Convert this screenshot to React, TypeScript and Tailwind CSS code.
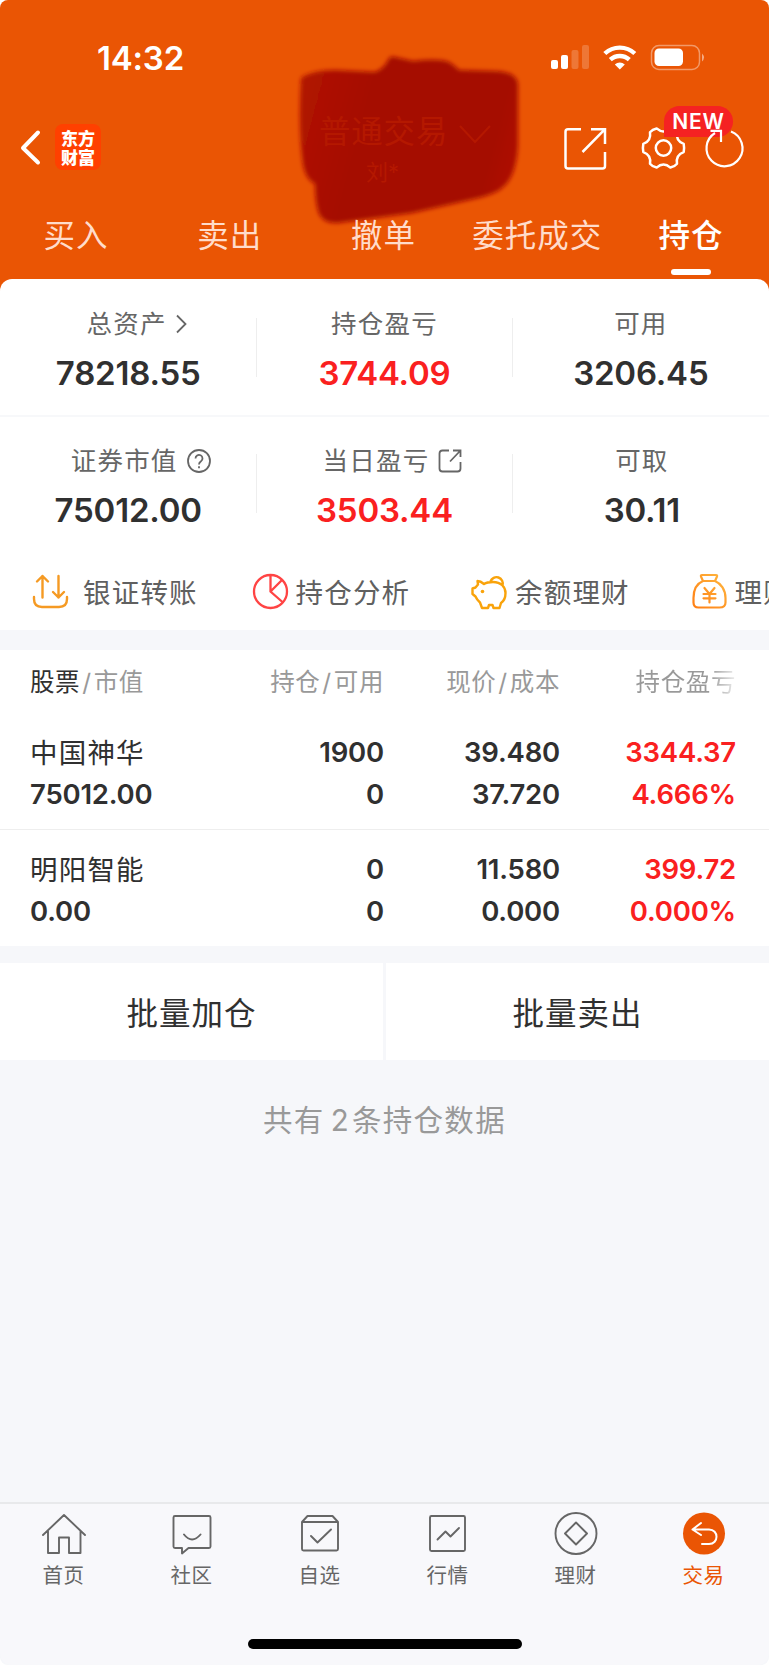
import type { ReactNode } from "react";

const tabs = ["买入", "卖出", "撤单", "委托成交", "持仓"];

const holdings = [
  { name: "中国神华", value: "75012.00", qty: "1900", avail: "0", price: "39.480", cost: "37.720", profit: "3344.37", rate: "4.666%" },
  { name: "明阳智能", value: "0.00", qty: "0", avail: "0", price: "11.580", cost: "0.000", profit: "399.72", rate: "0.000%" },
];

function StatusBar() {
  return (
    <div className="flex h-[115px] justify-between pr-[64px] pl-[97px] text-white">
      <div className="mt-[34px] h-12 text-[33px] leading-[48px] font-semibold tracking-[-.2px]">14:32</div>
      <svg className="mt-[42px]" width="156" height="32" viewBox="549 42 156 32" fill="#fff">
        <rect x="551" y="60" width="7" height="9" rx="2" />
        <rect x="561" y="55" width="7" height="14" rx="2" />
        <rect x="571.5" y="50" width="7" height="19" rx="2" opacity=".2" />
        <rect x="582" y="45" width="7" height="24" rx="2" opacity=".2" />
        <g fill="none" stroke="#fff" strokeWidth="4.4">
          <path d="M604.8 53.5a22 22 0 0 1 30 0" />
          <path d="M610.3 59.700a14 14 0 0 1 19 0" />
        </g>
        <path d="M619.800 69.500l-5-5a7.500 7.500 0 0 1 10 0z" />
        <rect x="651.5" y="45.500" width="48" height="24" rx="7.500" fill="none" stroke="#fff" strokeOpacity=".4" strokeWidth="1.500" />
        <rect x="654.5" y="48.500" width="28.500" height="17.500" rx="4.500" />
        <path d="M702 53.500v8q4-4 0-8" opacity=".5" />
      </svg>
    </div>
  );
}

function TitleBar() {
  return (
    <div className="relative flex h-[90px] items-start justify-between pr-[24px] pl-[19px]">
      <div className="flex">
        <svg className="mt-[14px]" width="22" height="38" viewBox="0 0 22 38" fill="none" stroke="#fff" strokeWidth="4" strokeLinecap="round" strokeLinejoin="round">
          <path d="M19 3.500L4 19l15 14.500" />
        </svg>
        <div className="mt-[9px] ml-[14px] flex size-[46px] flex-col items-center justify-center rounded-[8px] bg-[#ff4000] font-['Noto_Sans_CJK_SC'] text-[17px] leading-[19px] font-black text-white">
          <span>东方</span>
          <span>财富</span>
        </div>
      </div>

      <div className="absolute top-[-65px] left-[292px] h-[178px] w-[234px]">
        <svg className="absolute inset-0" width="234" height="178" viewBox="292 50 234 178">
          <defs>
            <filter id="soft" x="-10%" y="-10%" width="120%" height="120%">
              <feGaussianBlur stdDeviation="2" />
            </filter>
            <linearGradient id="ink" x1="0" y1="0.3" x2="1" y2="0.5">
              <stop stopColor="#b01402" />
              <stop offset=".3" stopColor="#a50900" />
              <stop offset=".9" stopColor="#a50900" />
              <stop offset="1" stopColor="#ad1001" />
            </linearGradient>
          </defs>
          <path
            filter="url(#soft)"
            fill="url(#ink)"
            d="M301 78q12-8 34-8l40 2q8-3 12-10 3-7 8-5l18 4q26-3 36 1 5 3 10 8l35 1q22 0 24 13v62q-2 32-16 42-6 6-28 11l-62 14-74 10q-14 1-19-9-4-11-4-30-9-4-12-19-5-35-2-87z"
          />
        </svg>
        <div className="relative pt-[62px] pl-[27px] text-[#b41800]">
          <div className="flex items-center gap-[11px]">
            <span className="text-[31.500px] leading-[40px] tracking-[.8px]">普通交易</span>
            <svg className="mt-[6px]" width="32" height="20" viewBox="0 0 32 20" fill="none" stroke="currentColor" strokeWidth="2">
              <path d="M1 1l15 16L31 1" />
            </svg>
          </div>
          <span className="block pl-[47px] text-[22px] leading-[40px]">刘*</span>
        </div>
      </div>

      <div className="relative flex text-white">
        <svg className="mt-[-5px]" width="184" height="66" viewBox="561 110 184 66" fill="none" stroke="currentColor" strokeWidth="2.500">
          <path d="M581 129.200h-13q-2.500 0-2.500 2.500V166q0 2.500 2.500 2.500h34.500q2.500 0 2.500-2.500v-14M591 129.200h14V144M605 129.200L582.500 152" />
          <circle cx="663.500" cy="148" r="7.700" />
          <path
            transform="translate(663.5 148)"
            strokeLinejoin="round"
            d="M20.200-4.100Q21 0 20.200 4.100 12.100 7 13.500 15.700 11 18.800 6.900 19.600 0 13.500-6.900 19.600-11 18.800-13.500 15.700-12.100 7-20.200 4.100-21 0-20.200-4.100-12.100-7-13.500-15.700-11-18.800-6.900-19.600 0-13.500 6.900-19.600 11-18.800 13.500-15.700 12.100-7 20.200-4.100z"
          />
        </svg>
        <div className="absolute top-[-9px] left-[103px] h-[31px] w-[69px] rounded-[16px] rounded-bl-none bg-[#f52222] text-center text-[21px] leading-[31px] font-semibold tracking-[.8px]">NEW</div>
        <svg className="absolute top-[-5px] left-[1px]" width="184" height="66" viewBox="561 110 184 66" fill="none" stroke="currentColor" strokeWidth="2.200">
          <path d="M730 131.500A18 18 0 1 1 714 133M709.500 130.800h10.500V142" />
        </svg>
      </div>
    </div>
  );
}

function Tabs() {
  return (
    <div className="grid h-[74px] grid-cols-5 pt-[3px] text-center text-[31.500px] leading-[56px] tracking-[1px] text-[#ffdccb]">
      {tabs.map((t) => (
        <div key={t} className={t === "持仓" ? "relative right-px font-medium text-white" : "relative right-px"}>
          {t}
          {t === "持仓" && <div className="absolute bottom-[4px] left-1/2 h-[6px] w-[40px] -translate-x-1/2 rounded-full bg-white" />}
        </div>
      ))}
    </div>
  );
}

function Stat({ label, value, icon, red }: { label: string; value: string; icon?: ReactNode; red?: boolean }) {
  return (
    <div className="flex flex-col items-center">
      <div className="flex h-[36px] items-center text-[25.500px] tracking-[1.200px] text-[#666]">
        {label}
        {icon}
      </div>
      <div className={`mt-[11px] text-[33px] leading-[40px] font-semibold tracking-[-.2px] ${red ? "text-[#fa2020]" : "text-[#303030]"}`}>{value}</div>
    </div>
  );
}

function Summary() {
  return (
    <div>
      <div className="relative grid h-[138px] grid-cols-3 border-b-2 border-[#f7f8fa] pt-[27px]">
        <Stat
          label="总资产"
          value="78218.55"
          icon={
            <svg className="mr-[-18px] ml-[8px]" width="13" height="20" viewBox="0 0 13 20" fill="none" stroke="#666" strokeWidth="1.800">
              <path d="M2 1.500l8.500 8.500L2 18.500" />
            </svg>
          }
        />
        <Stat label="持仓盈亏" value="3744.09" red />
        <Stat label="可用" value="3206.45" />
        <div className="absolute top-[39px] left-[256px] h-[59px] w-px bg-[#eee]" />
        <div className="absolute top-[39px] left-[512px] h-[59px] w-px bg-[#eee]" />
      </div>
      <div className="relative grid h-[123px] grid-cols-3 pt-[26px]">
        <Stat
          label="证券市值"
          value="75012.00"
          icon={
            <svg className="mr-[-26px] ml-[8px]" width="26" height="26" viewBox="0 0 26 26" fill="none" stroke="#666" strokeWidth="1.800">
              <circle cx="13" cy="13" r="11" />
              <path d="M9.500 10.500a3.500 3.500 0 1 1 5.500 2.800q-2 1.300-2 3.200M13 18.300v2" />
            </svg>
          }
        />
        <Stat
          label="当日盈亏"
          value="3503.44"
          red
          icon={
            <svg className="mr-[-16px] ml-[9px]" width="24" height="24" viewBox="0 0 24 24" fill="none" stroke="#666" strokeWidth="1.800">
              <path d="M11 1.500H4.500q-3 0-3 3v15q0 3 3 3h15q3 0 3-3V13M15 1.500h7.500V8M22.500 1.500L12 12.500" />
            </svg>
          }
        />
        <div className="pl-[2px]">
          <Stat label="可取" value="30.11" />
        </div>
        <div className="absolute top-[37px] left-[256px] h-[59px] w-px bg-[#eee]" />
        <div className="absolute top-[37px] left-[512px] h-[59px] w-px bg-[#eee]" />
      </div>
    </div>
  );
}

function Actions() {
  return (
    <div className="flex h-[90px] overflow-hidden pt-[33px] pl-[32px] text-[27.500px] leading-[40px] tracking-[1.200px] whitespace-nowrap text-[#606060]">
      <div className="flex w-[219.500px] shrink-0">
        <svg className="mr-[14px]" width="37" height="38" viewBox="0 0 37 38" fill="none" stroke="#f59a23" strokeWidth="2.400" strokeLinecap="round" strokeLinejoin="round">
          <path d="M2 24v2q0 8 8 8h17q8 0 8-8v-2M10.500 24.500V3M5 8.500L10.500 3 16 8.500M26.500 3v21.500M21 19l5.500 5.500L32 19" />
        </svg>
        银证转账
      </div>
      <div className="flex w-[219.500px] shrink-0">
        <svg className="mr-[7px]" width="37" height="38" viewBox="0 0 37 38" fill="none" stroke="#ff4444" strokeWidth="2.300">
          <circle cx="18.500" cy="18.500" r="16.500" />
          <path d="M18.500 2v16.500l12.500 11M18.500 18.500L30 7" />
        </svg>
        持仓分析
      </div>
      <div className="flex w-[219.500px] shrink-0">
        <svg className="mr-[7px]" width="37" height="38" viewBox="0 0 37 38" fill="none" stroke="#f9a30b" strokeWidth="2.400" strokeLinejoin="round">
          <path d="M13 11q3-2 9-2c8 0 12.500 5 12.500 11q0 7-4.500 10l-1.500 5h-6l-1-3h-3.500l-1 3h-6l-2-5.500q-3-2.500-4.500-6L1.500 21v-5.500l3-1 2.500-3L6.500 8q3 0 6.500 3zM19.500 8.500a6.300 6.300 0 1 1 12 4" />
          <circle cx="11.500" cy="18.500" r="1.800" fill="#f9a30b" stroke="none" />
        </svg>
        余额理财
      </div>
      <div className="flex w-[219.500px] shrink-0">
        <svg className="mr-[7px]" width="37" height="38" viewBox="0 0 37 38" fill="none" stroke="url(#bag)" strokeWidth="2.200" strokeLinejoin="round" strokeLinecap="round">
          <defs>
            <linearGradient id="bag" gradientUnits="userSpaceOnUse" x1="2" y1="35" x2="32" y2="3">
              <stop stopColor="#ff7d12" />
              <stop offset="1" stopColor="#ffb43d" />
            </linearGradient>
          </defs>
          <path d="M12 8L10 3.500q-.5-1.500 1-1.500h14q1.500 0 1 1.500L24 8zM12 8C6 10.500 2.500 17 2.500 25v4.500q0 5 5 5h21q6 0 6-5V25c0-8-4.500-14.500-10.500-17M13.500 15l5 6 5-6M18.500 21v8.500M12.500 21h12M12.500 25.300h12" />
        </svg>
        理财产品
      </div>
    </div>
  );
}

const cols = "grid grid-cols-[214px_140px_176px_176px] pl-[30px]";

function Holdings() {
  return (
    <div className="bg-white">
      <div className={`${cols} h-[76px] pt-[12px] text-right text-[24.500px] leading-[40px] tracking-[.6px] text-[#999]`}>
        <div className="text-left">
          <span className="text-[#303030]">股票</span>
          <span className="px-[2px]">/</span>市值
        </div>
        <div>持仓<span className="px-[2px]">/</span>可用</div>
        <div>现价<span className="px-[2px]">/</span>成本</div>
        <div className="bg-gradient-to-r from-[#999] from-85% to-[#eee] bg-clip-text text-transparent">持仓盈亏</div>
      </div>
      {holdings.map((h, i) => (
        <div
          key={h.name}
          className={`${cols} text-right text-[27.500px] leading-[42px] font-semibold tracking-[-.2px] text-[#303030] ${i === 0 ? "h-[104px] border-b border-[#eee] pt-[5px]" : "h-[116px] pt-[18px]"}`}
        >
          <div className="text-left">
            <div className="translate-y-px text-[27.500px] font-normal tracking-[1.200px]">{h.name}</div>
            <div>{h.value}</div>
          </div>
          <div>
            <div>{h.qty}</div>
            <div>{h.avail}</div>
          </div>
          <div>
            <div>{h.price}</div>
            <div>{h.cost}</div>
          </div>
          <div className="text-[#fa2020]">
            <div>{h.profit}</div>
            <div>{h.rate}</div>
          </div>
        </div>
      ))}
    </div>
  );
}

function NavItem({ label, active, children }: { label: string; active?: boolean; children: ReactNode }) {
  return (
    <div className={active ? "flex flex-col items-center text-[#ea5504]" : "flex flex-col items-center text-[#666]"}>
      <svg width="46" height="46" viewBox="0 0 46 46" fill="none" stroke="currentColor" strokeWidth="1.900" strokeLinejoin="round" strokeLinecap="round">
        {children}
      </svg>
      <span className="mt-[3px] mr-[1px] text-[20.500px] leading-[30px] tracking-[.6px]">{label}</span>
    </div>
  );
}

function BottomNav() {
  return (
    <div className="h-[163px] rounded-b-[12px] border-t-2 border-[#e8e9eb] bg-[#f8f8fb]">
      <div className="grid grid-cols-[repeat(6,128px)] pt-[8px]">
        <NavItem label="首页">
          <path d="M2 23L23 3l21 20M7 19v22h11V25.500h10V41h11.500V19" />
        </NavItem>
        <NavItem label="社区">
          <path d="M6 4h34q1.500 0 1.500 1.500v29q0 1.500-1.500 1.500H19.500L13 41.500V36H6q-1.500 0-1.500-1.500v-29Q4.500 4 6 4zM15 22.500q8 10 16.500 0" />
        </NavItem>
        <NavItem label="自选">
          <path d="M5 10v27q0 1.500 1.500 1.500h33q1.500 0 1.500-1.500V10l-5.500-6H10.500zh36M14 24l6.500 6.500L34 17.500" />
        </NavItem>
        <NavItem label="行情">
          <rect x="5" y="4" width="35" height="35" rx="1.500" />
          <path d="M12.500 27.500l8-8 5 5L34 16" />
        </NavItem>
        <NavItem label="理财">
          <circle cx="23" cy="21.500" r="20.500" />
          <path d="M23 10.500l11 11-11 11-11-11z" />
        </NavItem>
        <NavItem label="交易" active>
          <circle cx="23" cy="21.500" r="21" fill="currentColor" stroke="none" />
          <path stroke="#fff" strokeWidth="2" d="M20 11l-8.500 6.500L20 23M11.500 17.500H28c10 0 10 14.500 0 14.500h-7" />
        </NavItem>
      </div>
      <div className="mx-auto mt-[48px] h-[10px] w-[274px] rounded-full bg-black" />
    </div>
  );
}

export default function App() {
  return (
    <div className="h-[1665px] w-[769px] overflow-hidden bg-white font-['Inter','Noto_Sans_CJK_SC',sans-serif]">
      <div className="flex h-full flex-col overflow-hidden rounded-[8px] bg-[#f6f7fa]">
        <div className="bg-[#ea5504]">
          <StatusBar />
          <TitleBar />
          <Tabs />
          <div className="rounded-t-[12px] bg-white">
            <Summary />
            <Actions />
          </div>
        </div>
        <div className="mt-[20px]">
          <Holdings />
        </div>
        <div className="mt-[17px] grid grid-cols-[383px_383px] gap-[3px] text-center text-[31.500px] tracking-[1px] text-[#303030]">
          <div className="h-[97px] bg-white pt-[2px] leading-[97px]">批量加仓</div>
          <div className="h-[97px] bg-white pt-[2px] leading-[97px]">批量卖出</div>
        </div>
        <div className="mt-[40px] text-center text-[29.500px] leading-[40px] tracking-[1.300px] text-[#999]">
          共有<span className="pr-[2px] pl-[6px]">2</span>条持仓数据
        </div>
        <div className="mt-auto">
          <BottomNav />
        </div>
      </div>
    </div>
  );
}
